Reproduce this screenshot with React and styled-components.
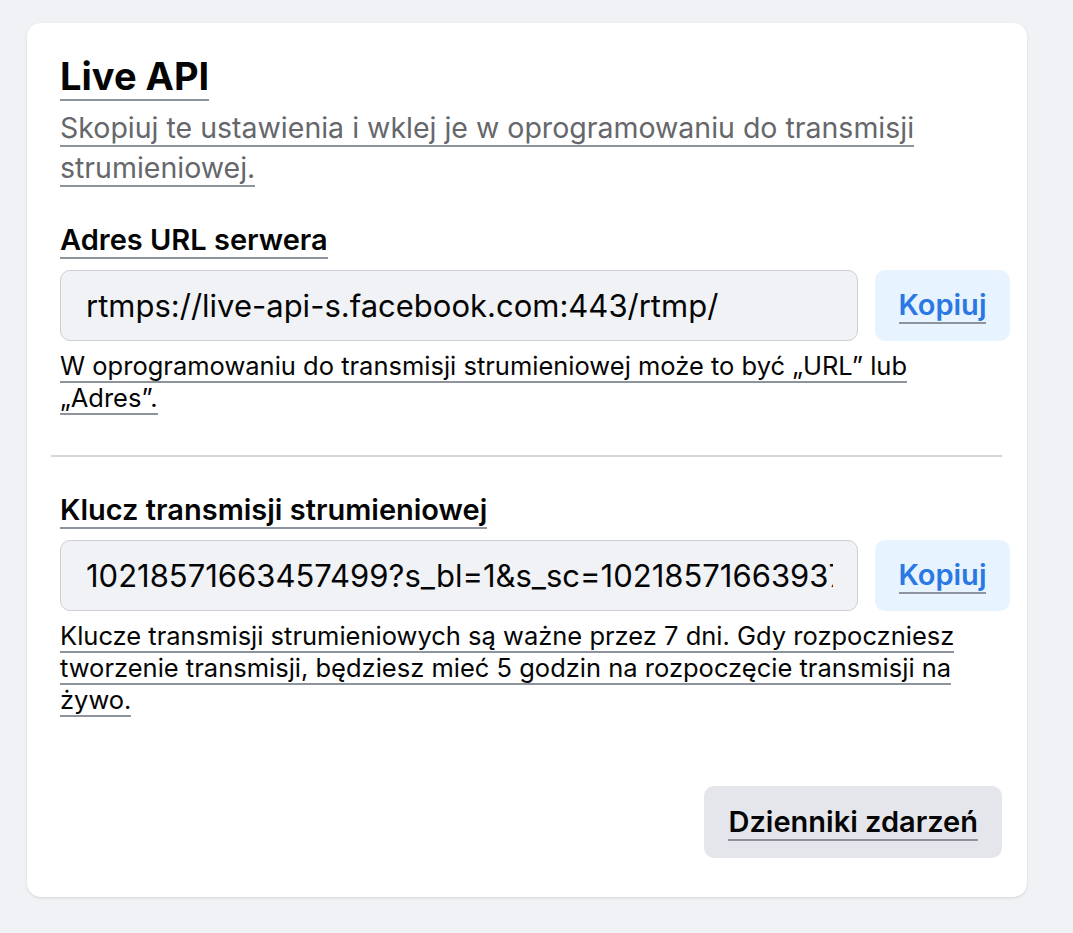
import React from 'react';
import styled, { createGlobalStyle } from 'styled-components';

const GlobalStyle = createGlobalStyle`
  body {
    margin: 0;
    background: #f0f2f5;
    font-family: Inter, "Noto Sans", sans-serif;
    color: #050505;
  }
`;

const Page = styled.div`
  padding: 23px 46px 37px 27px;
`;

const Card = styled.div`
  background: #fff;
  border-radius: 14px;
  box-shadow: 0 1px 3px rgba(0, 0, 0, 0.12);
  padding: 30px 17px 39px 33px;
`;

// inline text with a grey rule under every line
const Lined = styled.span`
  border-bottom: 2px solid #8d949e;
`;

const Title = styled.h2`
  margin: 0;
  font-size: 38px;
  line-height: 46px;
  font-weight: 700;
`;

const Subtitle = styled.p`
  margin: 9px 0 0;
  font-size: 28.5px;
  line-height: 40px;
  color: #65676b;
`;

const Section = styled.div`
  margin-top: ${p => p.top || 0}px;
`;

const Label = styled.div`
  font-size: 29px;
  line-height: 36px;
  font-weight: 600;
  margin-bottom: 12px;
`;

const FieldRow = styled.div`
  display: flex;
  gap: 17px;
`;

const Field = styled.div`
  flex: 1;
  min-width: 0;
  height: 71px;
  box-sizing: border-box;
  display: flex;
  align-items: center;
  padding: 0 24px 0 25px;
  background: #f0f2f5;
  border: 1px solid #ccd0d5;
  border-radius: 10px;
`;

const FieldText = styled.div`
  flex: 1;
  min-width: 0;
  font-size: 31px;
  line-height: 40px;
  white-space: nowrap;
  overflow: hidden;
`;

const CopyButton = styled.div`
  width: 135px;
  height: 71px;
  display: flex;
  align-items: center;
  justify-content: center;
  background: #e7f3ff;
  border-radius: 10px;
  color: #2a78e3;
  font-size: 29px;
  font-weight: 600;
`;

const Helper = styled.p`
  margin: 9px 0 0;
  font-size: 25.5px;
  line-height: 32px;
`;

const Divider = styled.hr`
  border: 0;
  border-top: 2px solid #d4d6da;
  margin: 41px 8px 0 -9px;
`;

const Footer = styled.div`
  display: flex;
  justify-content: flex-end;
  padding-right: 8px;
  margin-top: 70px;
`;

const LogButton = styled.div`
  height: 72px;
  padding: 0 24px;
  display: flex;
  align-items: center;
  background: #e4e6eb;
  border-radius: 10px;
  font-size: 29px;
  font-weight: 600;
`;

const fields = [
  {
    label: 'Adres URL serwera',
    value: 'rtmps://live-api-s.facebook.com:443/rtmp/',
    help: 'W oprogramowaniu do transmisji strumieniowej może to być „URL” lub „Adres”.',
  },
  {
    label: 'Klucz transmisji strumieniowej',
    value: '10218571663457499?s_bl=1&s_sc=10218571663937&s_sw=0&s_vt=api-s&a=AbxXk',
    help: 'Klucze transmisji strumieniowych są ważne przez 7 dni. Gdy rozpoczniesz tworzenie transmisji, będziesz mieć 5 godzin na rozpoczęcie transmisji na żywo.',
  },
];

const App = () => (
  <Page>
    <GlobalStyle />
    <Card>
      <Title><Lined>Live API</Lined></Title>
      <Subtitle>
        <Lined>Skopiuj te ustawienia i wklej je w oprogramowaniu do transmisji strumieniowej.</Lined>
      </Subtitle>
      {fields.map((f, i) => (
        <React.Fragment key={i}>
          {i > 0 && <Divider />}
          <Section top={i === 0 ? 34 : 35}>
            <Label><Lined>{f.label}</Lined></Label>
            <FieldRow>
              <Field><FieldText>{f.value}</FieldText></Field>
              <CopyButton><Lined>Kopiuj</Lined></CopyButton>
            </FieldRow>
            <Helper><Lined>{f.help}</Lined></Helper>
          </Section>
        </React.Fragment>
      ))}
      <Footer>
        <LogButton><Lined>Dzienniki zdarzeń</Lined></LogButton>
      </Footer>
    </Card>
  </Page>
);

export default App;
